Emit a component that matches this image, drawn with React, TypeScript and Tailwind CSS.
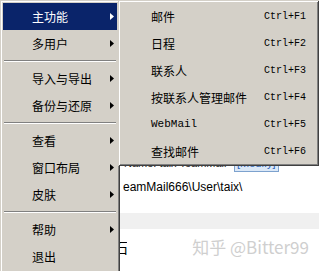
import React from "react";

const cjk = { fontFamily: '"Noto Sans CJK SC", "Noto Sans", sans-serif' };
const mono = { fontFamily: '"Liberation Mono", "DejaVu Sans Mono", monospace' };

type Item = { label: string; arrow?: boolean; active?: boolean } | "sep";

const mainItems: Item[] = [
  { label: "主功能", arrow: true, active: true },
  { label: "多用户", arrow: true },
  "sep",
  { label: "导入与导出", arrow: true },
  { label: "备份与还原", arrow: true },
  "sep",
  { label: "查看", arrow: true },
  { label: "窗口布局", arrow: true },
  { label: "皮肤", arrow: true },
  "sep",
  { label: "帮助", arrow: true },
  { label: "退出" },
];

const subItems = [
  { label: "邮件", key: "Ctrl+F1" },
  { label: "日程", key: "Ctrl+F2" },
  { label: "联系人", key: "Ctrl+F3" },
  { label: "按联系人管理邮件", key: "Ctrl+F4" },
  { label: "WebMail", key: "Ctrl+F5", latin: true },
  { label: "查找邮件", key: "Ctrl+F6" },
];

function Arrow({ white }: { white?: boolean }) {
  return (
    <svg width="4" height="7" viewBox="0 0 4 7" className="shrink-0">
      <polygon points="0,0 4,3.5 0,7" fill={white ? "#ffffff" : "#000000"} />
    </svg>
  );
}

const bevel =
  "shadow-[inset_1px_1px_0_#d4d0c8,inset_-1px_-1px_0_#404040,inset_2px_2px_0_#ffffff,inset_-2px_-2px_0_#808080]";

export default function App() {
  return (
    <div className="relative w-[319px] h-[271px] overflow-hidden bg-white flex" style={cjk}>
      {/* window behind the menus */}
      <div className="w-[118px] shrink-0 bg-[#d4d0c8]" />
      <div className="flex-1 flex flex-col border-l-2 border-[#404040] bg-white">
        <div className="h-[156px]" />
        <div className="h-[14px] flex items-center pl-[4px] text-[11px] text-[#222]" style={{ fontFamily: '"Liberation Sans", sans-serif' }}>
          <span className="w-[110px]">Name: taix TeamMail</span>
          <span className="px-[2px] bg-[#dbe8f7] text-[#2a63b8] border border-[#7da2ce]">[Modify]</span>
        </div>
        <div className="h-[11px]" />
        <div className="h-[12px] flex items-center pl-[3px] text-[12px] text-black" style={{ fontFamily: '"Liberation Sans", sans-serif' }}>
          eamMail666\User\taix\
        </div>
        <div className="h-[20px]" />
        <div className="h-[16px] bg-[#f0f0f0]" />
        <div className="flex-1 flex items-start pt-[10px]">
          <div className="w-[7px] overflow-hidden flex justify-end">
            <span className="text-[14px] leading-[16px] text-black shrink-0 -mr-[1px]">石</span>
          </div>
          <div className="flex-1 flex justify-end pr-[10px] -mt-[5px] text-[17px] text-[#cfcfcf]">
            知乎 @Bitter99
          </div>
        </div>
      </div>

      {/* main menu */}
      <div className={`absolute left-0 top-0 w-[120px] h-[280px] bg-[#d4d0c8] p-[3px] ${bevel}`}>
        {mainItems.map((it, i) =>
          it === "sep" ? (
            <div key={i} className="h-[8px] flex flex-col justify-center px-[1px]">
              <div className="h-px bg-[#808080]" />
              <div className="h-px bg-white" />
            </div>
          ) : (
            <div
              key={i}
              className={`h-[27px] flex items-center pl-[29px] pr-[3px] text-[12px] ${
                it.active ? "bg-[#0a246a] text-white" : "text-black"
              }`}
            >
              <span className="flex-1">{it.label}</span>
              {it.arrow && <Arrow white={it.active} />}
            </div>
          )
        )}
      </div>

      {/* sub menu */}
      <div className={`absolute left-[118px] top-0 w-[201px] h-[166px] bg-[#d4d0c8] p-[3px] ${bevel}`}>
        {subItems.map((s) => (
          <div key={s.key} className="h-[27px] flex items-center pl-[30px] text-[12px] text-black">
            <span className={`w-[113px] shrink-0 ${s.latin ? "text-[11px]" : ""}`} style={s.latin ? mono : undefined}>
              {s.label}
            </span>
            <span className="text-[10px]" style={mono}>
              {s.key}
            </span>
          </div>
        ))}
      </div>
    </div>
  );
}
